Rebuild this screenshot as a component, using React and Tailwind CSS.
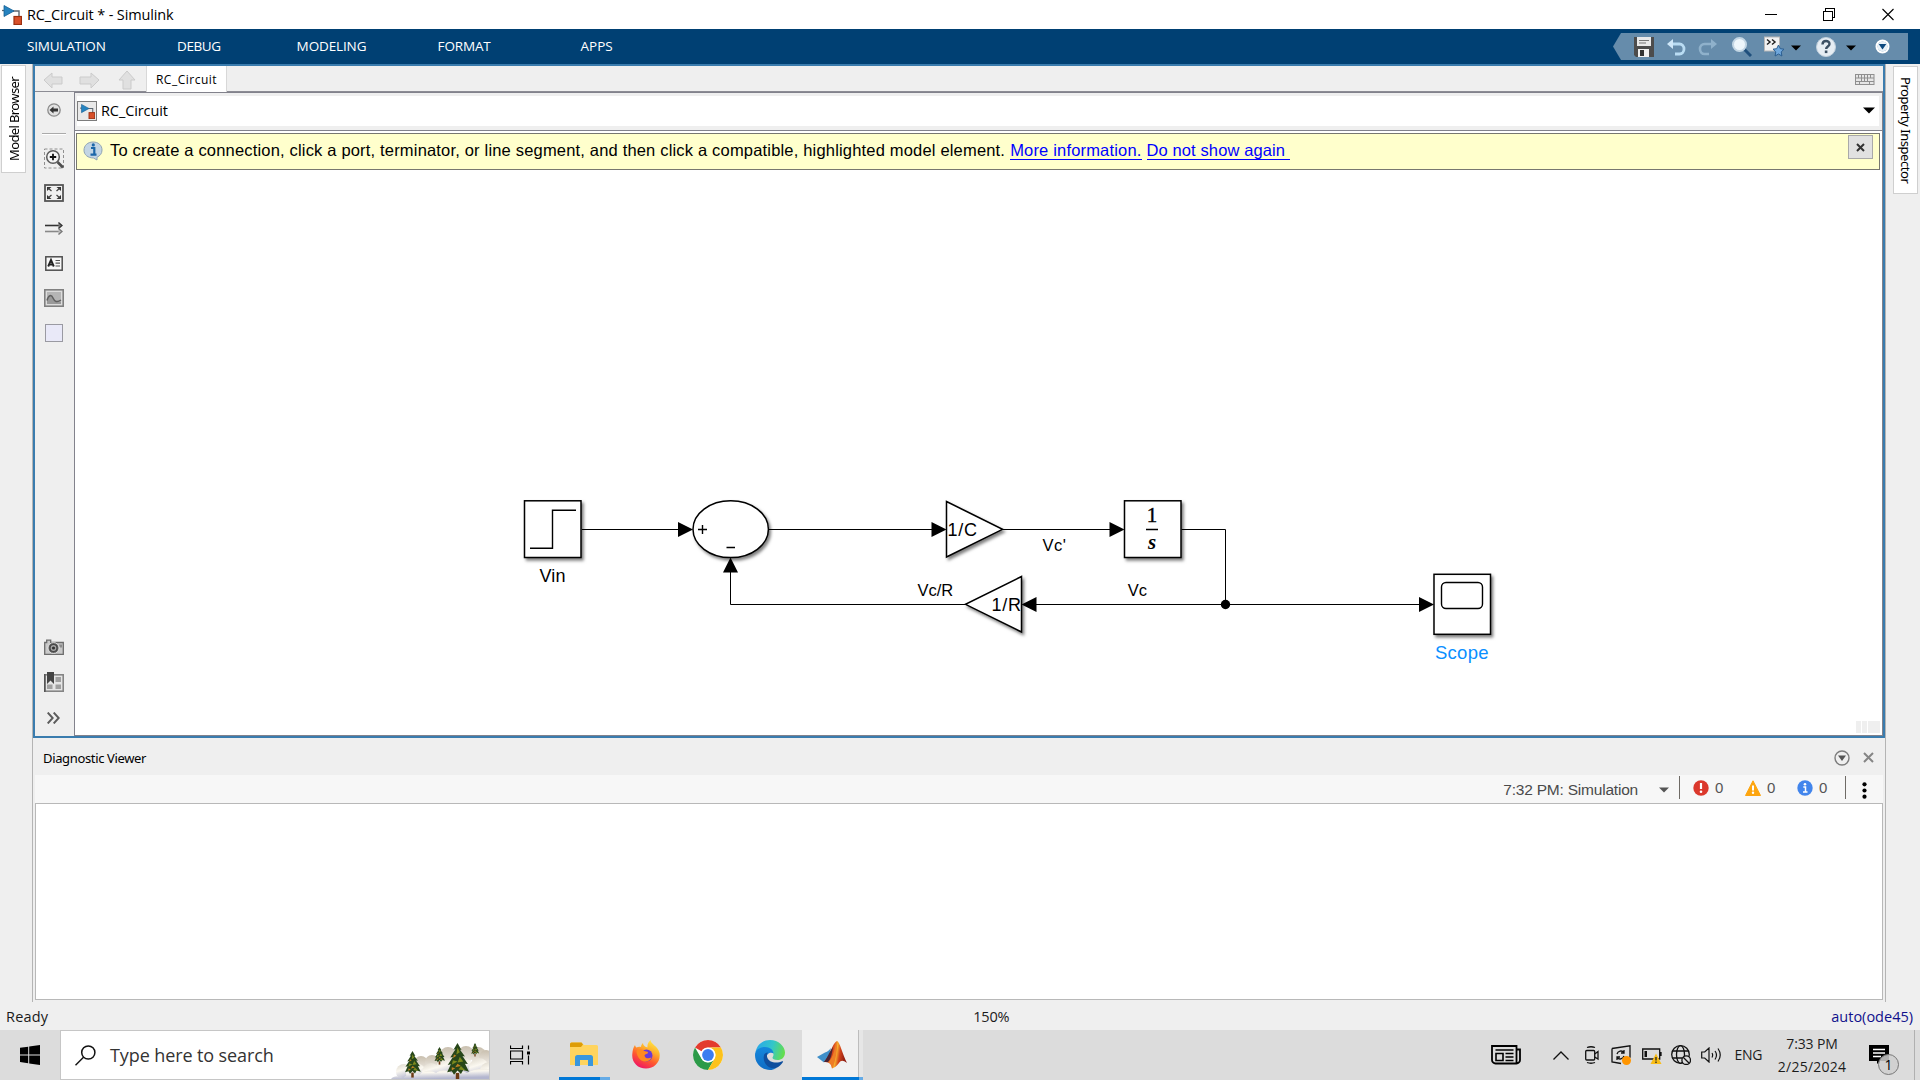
import React, { useLayoutEffect, useRef } from "react";

/* Single-line label whose tracking is adjusted so that it spans a given width. */
function Label({ w, className = "", children }) {
  const ref = useRef(null);
  useLayoutEffect(() => {
    const el = ref.current;
    el.style.letterSpacing = "0px";
    const natural = el.offsetWidth;
    el.style.letterSpacing = (w - natural) / children.length + "px";
  }, [w, children]);
  return (
    <span ref={ref} className={"inline-block shrink-0 whitespace-pre " + className}>
      {children}
    </span>
  );
}

const UI = "font-['Open_Sans',sans-serif]";
const NOTO = "font-['Noto_Sans',sans-serif]";

function SimulinkGlyph({ className }) {
  return (
    <svg className={className} viewBox="0 0 20 20">
      <path d="M11 6h6v6" fill="none" stroke="#5b6670" strokeWidth="1.4" />
      <path d="M0 5.5h3" stroke="#5b6670" strokeWidth="1.3" />
      <path d="M2 0.5v11L12 6z" fill="#2583c0" stroke="#165f93" strokeWidth="0.8" />
      <rect x="12" y="11.5" width="7.5" height="8" fill="#d8502a" stroke="#9c3010" strokeWidth="1.2" />
    </svg>
  );
}

function TitleBar() {
  return (
    <div className="flex h-[29px] items-center bg-white">
      <SimulinkGlyph className="ml-[2px] h-[20px] w-[20px]" />
      <Label w={147} className={"ml-[5px] text-[14.5px] leading-5 text-black " + UI}>{"RC_Circuit * - Simulink"}</Label>
      <svg className="ml-auto mr-[25px] h-[13px] w-[130px]" viewBox="0 0 130 13" fill="none" stroke="#000" shapeRendering="crispEdges">
        <path d="M0 6.5h12" />
        <path d="M58.500 3.500h9v9h-9zM60.500 3.500v-3h9v9h-2" />
        <path d="M117.500 1l11 11M128.500 1l-11 11" shapeRendering="auto" strokeWidth="1.1" />
      </svg>
    </div>
  );
}

function QuickAccess() {
  return (
    <div className="ml-auto mr-[12px] mt-[4px] flex h-[27px] w-[295px] items-center bg-[#668cab] [clip-path:polygon(8px_0,100%_0,100%_100%,8px_100%,0_50%)]">
      <svg className="ml-[21px] h-[20px] w-[20px]" viewBox="0 0 20 20">
        <path d="M0 0h20v20H2l-2-2z" fill="#4c4c4c" />
        <rect x="3" y="0" width="14" height="9" fill="#e9e9e9" />
        <path d="M5 3.500h10M5 6h7" stroke="#777" strokeWidth="1.200" />
        <rect x="4" y="12" width="11" height="8" fill="#f1f1f1" />
        <rect x="6" y="13" width="4" height="6" fill="#333" />
      </svg>
      <svg className="ml-[13px] mt-[2px] h-[18px] w-[19px]" viewBox="0 0 19 18" fill="none">
        <path d="M5 5h7.500a4.500 5 0 0 1 0 10H8" stroke="#b9dcf3" strokeWidth="2.800" />
        <path d="M0 5l6-5v10z" fill="#cfe7f8" />
      </svg>
      <svg className="ml-[12px] mt-[2px] h-[18px] w-[19px]" viewBox="0 0 19 18" fill="none">
        <path d="M14 5H6.500a4.500 5 0 0 0 0 10H11" stroke="#8fb1cb" strokeWidth="2.600" />
        <path d="M19 5l-6-5v10z" fill="#8fb1cb" />
      </svg>
      <svg className="ml-[15px] h-[20px] w-[20px]" viewBox="0 0 20 20">
        <path d="M12 12l7 7" stroke="#1f4f7c" strokeWidth="3" />
        <circle cx="7.500" cy="7.500" r="6.500" fill="#eef6fb" stroke="#c3d6e4" strokeWidth="2" />
      </svg>
      <svg className="ml-[12px] h-[21px] w-[20px]" viewBox="0 0 20 21">
        <rect x="0.500" y="1" width="15" height="14" fill="#f2f2f2" stroke="#b8b8b8" />
        <path d="M3 3.500l3 2.500-3 2.500M8 3.500l3 2.500-3 2.500" fill="none" stroke="#222" strokeWidth="1.500" />
        <path d="M14.500 9l1.800 3.700 3.700.5-2.800 2.700.7 4.100-3.400-2-3.400 2 .7-4.100L9 13.200l3.700-.5z" fill="#6fa7dc" stroke="#2b5e90" strokeWidth="1" />
      </svg>
      <svg className="ml-[7px] mt-[2px] h-[6px] w-[10px]" viewBox="0 0 10 6"><path d="M0 0.500h10L5 5.500z" fill="#000" /></svg>
      <svg className="ml-[15px] h-[20px] w-[20px]" viewBox="0 0 20 20">
        <circle cx="10" cy="10" r="9.500" fill="#e6edf3" stroke="#c2d0dc" />
        <path d="M6.500 7.500c0-4.500 7-4.500 7-.6 0 2.600-3.400 2.600-3.400 5.200" fill="none" stroke="#3c5063" strokeWidth="2.400" />
        <rect x="8.800" y="13.500" width="2.600" height="2.600" fill="#3c5063" />
      </svg>
      <svg className="ml-[10px] mt-[2px] h-[6px] w-[10px]" viewBox="0 0 10 6"><path d="M0 0.500h10L5 5.500z" fill="#000" /></svg>
      <svg className="ml-[19px] h-[15px] w-[15px]" viewBox="0 0 15 15">
        <circle cx="7.500" cy="7.500" r="5.900" fill="#0d4f87" stroke="#fff" strokeWidth="2.200" />
        <circle cx="7.500" cy="7.500" r="5" fill="#e8f1f8" />
        <path d="M3.700 5h7.600l-3.800 5.500z" fill="#0d4a80" />
      </svg>
    </div>
  );
}

function Ribbon() {
  const tabs = [["SIMULATION", 79], ["DEBUG", 44], ["MODELING", 70], ["FORMAT", 53], ["APPS", 32]];
  return (
    <div className="flex h-[35px] bg-[#004073]">
      {tabs.map(([name, w]) => (
        <div key={name} className="flex w-[132.600px] justify-center pt-[7px]">
          <Label w={w} className={"text-[13.500px] leading-5 text-white " + UI}>{name}</Label>
        </div>
      ))}
      <QuickAccess />
    </div>
  );
}

function VerticalLabel({ h, className, children }) {
  const ref = useRef(null);
  useLayoutEffect(() => {
    const el = ref.current;
    el.style.letterSpacing = "0px";
    el.style.letterSpacing = (h - el.offsetHeight) / children.length + "px";
  }, [h, children]);
  return (
    <span ref={ref} className={"inline-block whitespace-pre text-[13px] leading-[18px] text-black [writing-mode:vertical-rl] " + NOTO + " " + className}>
      {children}
    </span>
  );
}

function FileTabs() {
  return (
    <div className="flex h-[26px] shrink-0 items-stretch border-b border-[#8c8c94] bg-[#efefef]">
      <svg className="ml-[8px] mt-[4px] h-[20px] w-[93px]" viewBox="0 0 93 20" fill="#e0e0e0" stroke="#cbcbcb">
        <path d="M1 10l8-7v4h10v7H9v4z" />
        <path d="M56 10l-8-7v4H37v7h11v4z" />
        <path d="M84 1l8 9h-4v9h-8v-9h-4z" />
      </svg>
      <div className="ml-[10px] mb-[-1px] flex w-[81px] items-center justify-center border-x border-[#d8d8d8] bg-white">
        <Label w={61} className={"mt-[1px] text-[12px] leading-4 text-black " + UI}>RC_Circuit</Label>
      </div>
      <svg className="ml-auto mr-[8px] mt-[8px] h-[11px] w-[20px]" viewBox="0 0 20 11" fill="none" stroke="#8f8f8f">
        <rect x="0.500" y="0.500" width="18.500" height="10" fill="#e6e6e6" />
        <path d="M0 4h19M0 7.500h19M3.500 1v3M6.500 1v6M9.500 1v6M12.500 1v6M15.500 1v3M4.500 8v3M14.500 8v3" />
      </svg>
    </div>
  );
}

function Palette() {
  return (
    <div className="flex w-[39px] shrink-0 flex-col items-center bg-[#efefef] pr-[2px]">
      <svg className="mt-[11px] h-[14px] w-[14px]" viewBox="0 0 14 14">
        <circle cx="7" cy="7" r="6.200" fill="#e2e2e2" stroke="#8b8b8b" strokeWidth="1.300" />
        <path d="M2.500 7l4-3.500v2H11v3H6.500v2z" fill="#333" />
      </svg>
      <div className="mt-[16px] h-[2px] w-[24px] border-t border-[#aaa] bg-white" />
      <svg className="mt-[13px] h-[21px] w-[20px]" viewBox="0 0 20 21" fill="none">
        <rect x="0.500" y="1" width="19" height="19" stroke="#909090" strokeDasharray="3 2" />
        <path d="M13.500 14l5.500 5.500" stroke="#4d4d4d" strokeWidth="2.600" />
        <circle cx="9" cy="9" r="6.300" fill="#f5f5f5" stroke="#5c5c5c" strokeWidth="1.500" />
        <path d="M5.800 9h6.400M9 5.800v6.400" stroke="#111" strokeWidth="1.800" />
      </svg>
      <svg className="mt-[15px] h-[18px] w-[20px]" viewBox="0 0 20 18">
        <rect x="1" y="1" width="18" height="16" fill="#f0f0f0" stroke="#555" strokeWidth="1.800" />
        <path d="M3 3h4.500L3 7zM17 3h-4.500L17 7zM3 15h4.500L3 11zM17 15h-4.500l4.500-4z" fill="#333" />
        <path d="M4 4l3.500 3M16 4l-3.500 3M4 14l3.500-3M16 14l-3.500-3" stroke="#444" strokeWidth="1.300" />
      </svg>
      <svg className="mt-[19px] h-[14px] w-[18px]" viewBox="0 0 18 14" fill="none">
        <path d="M0 4.500h15" stroke="#333" strokeWidth="1.600" />
        <path d="M0 10.500h15" stroke="#888" strokeWidth="1.600" />
        <path d="M13.500 1.500l3.500 3-3.500 3" fill="#777" stroke="#333" strokeWidth="1.300" />
        <path d="M13.500 7.500l3.500 3-3.500 3" fill="#bbb" stroke="#777" strokeWidth="1.300" />
      </svg>
      <svg className="mt-[21px] h-[15px] w-[18px]" viewBox="0 0 18 15">
        <rect x="0.800" y="0.800" width="16.400" height="13.400" fill="#f8f8f8" stroke="#4f4f4f" strokeWidth="1.500" />
        <path d="M3.200 10.500L6 4l2.800 6.500M4.300 8.600h3.400" fill="none" stroke="#222" strokeWidth="1.900" />
        <path d="M10.500 4.500h4.500M10.500 7.200h4.500M10.500 10h4.500" stroke="#555" strokeWidth="1.200" />
      </svg>
      <svg className="mt-[18px] h-[18px] w-[20px]" viewBox="0 0 20 18">
        <rect x="0.800" y="0.800" width="18.400" height="16.400" fill="#dcdcdc" stroke="#808080" strokeWidth="1.600" />
        <rect x="3" y="3" width="14" height="12" fill="#b5b5b5" />
        <path d="M3 11.500c1.500-6 4.500-6 6-2.500s4 5 8 3.500V15H3z" fill="#999" />
        <path d="M3 11.500c1.500-6 4.500-6 6-2.500s4 5 8 2" fill="none" stroke="#606060" strokeWidth="1.500" />
      </svg>
      <div className="mt-[17px] h-[18px] w-[18px] border border-[#9a9aa2] bg-[#e9e9f8]" />
      <svg className="mt-auto h-[16px] w-[20px]" viewBox="0 0 20 16">
        <path d="M0.700 3.500h2V1.200h4v2.300h12.600v11.800H.7z" fill="#c9c9c9" stroke="#6c6c6c" strokeWidth="1.300" />
        <circle cx="9.500" cy="9" r="5.500" fill="#666" stroke="#eee" strokeWidth="0.800" />
        <circle cx="9.500" cy="9" r="3.500" fill="#a5a5a5" stroke="#444" strokeWidth="1.200" />
        <circle cx="9.500" cy="9" r="1.600" fill="#333" />
        <path d="M15 5.500h3v3h-2z" fill="#8c8c8c" />
      </svg>
      <svg className="mt-[17px] h-[20px] w-[20px]" viewBox="0 0 20 20">
        <rect x="0.800" y="2.800" width="18.400" height="16.400" fill="#e5e5e5" stroke="#858585" strokeWidth="1.600" />
        <path d="M0.800 2v18" stroke="#555" strokeWidth="1.600" />
        <path d="M11.500 5h5.500v5h-5.500zM11.500 12.500h5.500v4.500h-5.500zM3 12.500h5.500v4.500H3z" fill="#a0a0a0" />
        <path d="M3 0h7v12l-3.500-3.500L3 12z" fill="#444" />
      </svg>
      <svg className="mb-[12px] mt-[20px] h-[12px] w-[13px]" viewBox="0 0 13 12" fill="none" stroke="#5c5c5c" strokeWidth="1.900">
        <path d="M0.700 0.500l5 5.500-5 5.500M6.700 0.500l5 5.500-5 5.500" />
      </svg>
    </div>
  );
}

function PathBar() {
  return (
    <div className="flex h-[39px] shrink-0 border-b border-t border-[#82828c] bg-[#efefef] pb-[4px] pt-[3px]">
      <div className="ml-[2px] mr-[3px] flex flex-1 items-center bg-white">
        <div className="flex h-[20px] w-[20px] items-center justify-center border border-[#7c7c7c] bg-[#e9e9e9]">
          <SimulinkGlyph className="h-[15px] w-[15px]" />
        </div>
        <Label w={67} className={"ml-[4px] text-[14.500px] leading-5 text-black " + UI}>RC_Circuit</Label>
        <svg className="ml-auto mr-[4px] mb-[2px] h-[7px] w-[12px]" viewBox="0 0 12 7"><path d="M0 0.500h12L6 6.500z" fill="#000" /></svg>
      </div>
    </div>
  );
}

function Notice() {
  return (
    <div className="ml-[1px] mr-[2px] mt-[2px] flex h-[37px] shrink-0 border border-[#777770] bg-[#ffffcc] font-['Liberation_Sans',Arial,sans-serif] text-[16.500px] leading-[20px]">
      <svg className="ml-[6px] mt-[7px] h-[20px] w-[20px]" viewBox="0 0 20 20">
        <path d="M10 1c5.500 0 9 3.400 9 8 0 3.500-2 6-5 7.200L14 19l-3.500-2C5 17 1 13.800 1 9.200 1 4.400 4.800 1 10 1z" fill="#c3d5e4" stroke="#8fa3b4" />
        <path d="M8 7h3.300v6.500M7.500 13.600h6" fill="none" stroke="#1c66a8" strokeWidth="2.200" />
        <circle cx="10.300" cy="3.900" r="1.600" fill="#1c66a8" />
      </svg>
      <Label w={895} className="ml-[7px] mt-[6px] text-black">To create a connection, click a port, terminator, or line segment, and then click a compatible, highlighted model element.</Label>
      <Label w={131} className="ml-[5px] mt-[6px] h-[20px] border-b border-[#0000ff] text-[#0000ff]">More information.</Label>
      <Label w={143} className="ml-[5px] mt-[6px] h-[20px] border-b border-[#0000ff] text-[#0000ff]">{"Do not show again "}</Label>
      <div className="ml-auto mr-[6px] mt-[1px] flex h-[24px] w-[25px] items-center justify-center border border-[#a9a9a9] bg-[#e1e1e1]">
        <svg className="h-[9px] w-[9px]" viewBox="0 0 9 9"><path d="M1 1l7 7M8 1L1 8" stroke="#333" strokeWidth="2" /></svg>
      </div>
    </div>
  );
}

/* Block diagram; user units are window pixels. */
function Diagram() {
  return (
    <svg className="block h-[565px] w-[1806px] shrink-0" viewBox="75 170 1806 565">
      <defs>
        <filter id="shadow" x="-20%" y="-20%" width="150%" height="150%">
          <feDropShadow dx="2" dy="2.500" stdDeviation="1.500" floodColor="#000" floodOpacity="0.500" />
        </filter>
      </defs>
      <g fill="none" stroke="#000" strokeWidth="1">
        <path d="M582 529.500H680M768.500 529.500H933M1003 529.500H1111M1181.500 529.500H1225.500V604.500M1420 604.500H1036M965 604.500H730.500V571" />
      </g>
      <g fill="#fff" stroke="#000" strokeWidth="1.500" filter="url(#shadow)">
        <rect x="524.500" y="500.800" width="56.500" height="56.700" />
        <ellipse cx="730.700" cy="529.200" rx="37.700" ry="28.400" />
        <path d="M946.500 501.500v55.500L1002.500 529.300z" />
        <path d="M1021.500 576.500v55.500L965.500 604.300z" />
        <rect x="1124.500" y="500.800" width="56.500" height="56.700" />
        <rect x="1434" y="574.300" width="56.500" height="60" />
      </g>
      <g>
        <path d="M678 522v15l15-7.500z" />
        <path d="M931.500 522v15l15-7.500z" />
        <path d="M1109.500 522v15l15-7.500z" />
        <path d="M1419 597v15l15-7.500z" />
        <path d="M1036.500 597v15l-15-7.500z" />
        <path d="M723 572.500h15l-7.500-15z" />
        <circle cx="1225.500" cy="604.500" r="4.700" />
      </g>
      <g fill="none" stroke="#000" strokeWidth="1.400">
        <path d="M530 548.300h22.500v-38H576" />
        <path d="M698 529.500h9M702.500 525v9M726.500 547.500h8.500M1146 529.500h12" />
        <rect x="1441.500" y="582.500" width="41" height="26" rx="4.500" />
      </g>
      <g fontFamily="'Liberation Sans', Arial, sans-serif" fontSize="18" fill="#000">
        <text x="947.500" y="535.700" textLength="29.500">1/C</text>
        <text x="991.500" y="610.700" textLength="29.500">1/R</text>
        <text x="539.500" y="581.500" textLength="26">Vin</text>
        <text x="1435" y="659" textLength="53.500" fontSize="18.500" fill="#0a8fff">Scope</text>
        <g fontSize="16.500">
          <text x="1042.500" y="550.700" textLength="23.500">{"Vc'"}</text>
          <text x="1127.800" y="595.700">Vc</text>
          <text x="917.500" y="595.700">Vc/R</text>
        </g>
      </g>
      <g fontFamily="'Liberation Serif', 'Times New Roman', serif" textAnchor="middle">
        <text x="1152" y="522" fontSize="21" stroke="#000" strokeWidth="0.400">1</text>
        <text x="1152" y="548.700" fontSize="21" fontWeight="700" fontStyle="italic">s</text>
      </g>
      <g fill="#efefef">
        <rect x="1856" y="721" width="5" height="12" />
        <rect x="1862" y="721" width="5" height="12" />
        <rect x="1868" y="721" width="12" height="12" />
      </g>
    </svg>
  );
}

function Editor() {
  return (
    <div className="flex h-[674px] flex-col border-2 border-[#3a7cae]">
      <FileTabs />
      <div className="flex min-h-0 flex-1">
        <Palette />
        <div className="flex min-w-0 flex-1 flex-col border-b border-l border-r border-[#82828c] bg-white">
          <PathBar />
          <Notice />
          <Diagram />
        </div>
      </div>
    </div>
  );
}

function Count({ children }) {
  return (
    <div className="flex items-center">
      {children}
      <span className="ml-[6px] text-[15px] leading-none text-[#555]">0</span>
    </div>
  );
}

function Diagnostics() {
  return (
    <div className="flex flex-1 flex-col bg-[#efefef]">
      <div className="flex h-[37px] items-center">
        <Label w={103} className={"ml-[10px] mt-[3px] text-[13px] leading-4 text-black " + NOTO}>Diagnostic Viewer</Label>
        <svg className="ml-auto mr-[13px] mt-[2px] h-[16px] w-[16px]" viewBox="0 0 16 16">
          <circle cx="8" cy="8" r="7" fill="none" stroke="#7c7c7c" strokeWidth="1.400" />
          <path d="M4 5.500h8L8 11z" fill="#555" />
        </svg>
        <svg className="mr-[11px] mt-[2px] h-[11px] w-[11px]" viewBox="0 0 11 11"><path d="M1 1l9 9M10 1l-9 9" stroke="#858585" strokeWidth="2" /></svg>
      </div>
      <div className="mx-[2px] flex h-[28px] items-center bg-[#f7f7f7] font-['Liberation_Sans',Arial,sans-serif]">
        <Label w={135} className="ml-auto mt-[1px] text-[15.500px] leading-5 text-[#4a4a4a]">7:32 PM: Simulation</Label>
        <svg className="ml-[21px] mt-[1px] h-[6px] w-[10px]" viewBox="0 0 10 6"><path d="M0 0.500h10L5 5.500z" fill="#555" /></svg>
        <div className="ml-[10px] mb-[4px] h-[23px] w-px bg-[#6f6b66]" />
        <div className="mb-[3px] ml-[13px] flex">
          <div className="w-[52px]"><Count>
            <svg className="h-[16px] w-[16px]" viewBox="0 0 16 16"><circle cx="8" cy="8" r="7.700" fill="#db382c" /><path d="M8 3v6" stroke="#fff" strokeWidth="2.200" /><circle cx="8" cy="11.800" r="1.300" fill="#fff" /></svg>
          </Count></div>
          <div className="w-[52px]"><Count>
            <svg className="h-[16px] w-[16px]" viewBox="0 0 16 16"><path d="M8 0.800L15.500 15.500H.5z" fill="#fda50f" stroke="#fda50f" strokeLinejoin="round" /><path d="M8 5.500v5" stroke="#fff" strokeWidth="2" /><circle cx="8" cy="12.800" r="1.200" fill="#fff" /></svg>
          </Count></div>
          <div className="w-[48px]"><Count>
            <svg className="h-[16px] w-[16px]" viewBox="0 0 16 16"><circle cx="8" cy="8" r="7.700" fill="#4285ec" /><path d="M6.300 7H8.500v5M6 12h4.500" fill="none" stroke="#fff" strokeWidth="1.500" /><circle cx="8" cy="4.200" r="1.300" fill="#fff" /></svg>
          </Count></div>
        </div>
        <div className="mb-[4px] h-[23px] w-px bg-[#6f6b66]" />
        <svg className="ml-[16px] mr-[16px] mt-[2px] h-[17px] w-[5px]" viewBox="0 0 5 17"><circle cx="2.500" cy="2.300" r="2.100" /><circle cx="2.500" cy="8.500" r="2.100" /><circle cx="2.500" cy="14.700" r="2.100" /></svg>
      </div>
      <div className="mx-[2px] h-[197px] border border-[#b8b8b8] bg-white" />
    </div>
  );
}

function Workspace() {
  return (
    <div className="flex h-[938px] bg-[#efefef]">
      <div className="w-[32px] shrink-0 pl-[1px] pt-px">
        <div className="flex h-[108px] w-[25px] items-center justify-center border border-[#cfcfcf] bg-white">
          <VerticalLabel h={84} className="rotate-180">Model Browser</VerticalLabel>
        </div>
      </div>
      <div className="flex w-[1854px] flex-col border-l border-r border-[#b4b4b4]">
        <Editor />
        <Diagnostics />
      </div>
      <div className="flex-1 pl-[7px] pt-[2px]">
        <div className="flex h-[128px] w-[25px] items-center justify-center border border-[#cfcfcf] bg-white">
          <VerticalLabel h={106} className="">Property Inspector</VerticalLabel>
        </div>
      </div>
    </div>
  );
}

function StatusBar() {
  return (
    <div className={"flex h-[28px] items-center bg-[#efefef] pl-[6px] pr-[7px] pt-[2px] text-[14.500px] leading-5 text-[#1a1a1a] " + UI}>
      <Label w={42}>Ready</Label>
      <Label w={36} className="ml-[925px]">150%</Label>
      <Label w={82} className="ml-auto text-[#10108c]">auto(ode45)</Label>
    </div>
  );
}

function Pine({ x, y, s }) {
  return (
    <g transform={`translate(${x} ${y}) scale(${s})`}>
      <path d="M-1.500 26h3v6h-3z" fill="#6b3a12" />
      <path d="M0 0l3.500 6-1.500-.3 4.500 6-2.200-.4 4.700 7-2.500-.3 3.500 7-5-1.500-2 3.500-3-3-3 3.500-2-3-4 1 3.200-7-2.700.6 4.500-7-2.300.4 4.500-7-1.700.3z" fill="#27461a" />
      <path d="M0 4l2 4-3 2zM2 12l3 4-5 1zM-4 15l4 1-5 3zM3 20l4 4-6-1z" fill="#7c8a1e" />
      <path d="M-3 10l2 1-3 2zM0 18l3 2-5 1zM-5 21l3 1-3 2z" fill="#c08322" />
    </g>
  );
}

function SearchBox() {
  return (
    <div className="flex h-[50px] w-[430px] items-center border border-[#c6c6c6] bg-white">
      <svg className="ml-[14px] h-[21px] w-[21px]" viewBox="0 0 21 21" fill="none" stroke="#111" strokeWidth="1.500">
        <circle cx="13.300" cy="7.500" r="6.600" />
        <path d="M8.500 12.300L0.500 20.300" />
      </svg>
      <Label w={164} className={"ml-[14px] text-[18px] leading-6 text-[#333] " + UI}>Type here to search</Label>
      <svg className="ml-auto h-[48px] w-[98px]" viewBox="0 0 98 48">
        <defs>
          <linearGradient id="far" x1="0" y1="0" x2="0" y2="1">
            <stop offset="0" stopColor="#c9bfae" />
            <stop offset="1" stopColor="#eeeae4" />
          </linearGradient>
          <linearGradient id="snow" x1="0" y1="0" x2="0.300" y2="1">
            <stop offset="0" stopColor="#dcd6ca" />
            <stop offset="0.450" stopColor="#fbf8f0" />
            <stop offset="1" stopColor="#b3b6cf" />
          </linearGradient>
        </defs>
        <g fill="url(#far)">
          <circle cx="30" cy="32" r="7" />
          <circle cx="41" cy="31" r="7" />
          <circle cx="57" cy="24" r="8" />
          <circle cx="75" cy="23" r="8" />
          <circle cx="87" cy="24" r="8" />
          <circle cx="95" cy="26" r="7" />
        </g>
        <g fill="url(#snow)">
          <circle cx="13" cy="41" r="8" />
          <circle cx="25" cy="42" r="10" />
          <circle cx="40" cy="41" r="9" />
          <circle cx="55" cy="37" r="10" />
          <circle cx="73" cy="36" r="9" />
          <circle cx="88" cy="37" r="10" />
          <circle cx="98" cy="40" r="9" />
        </g>
        <path d="M0 48c3-4 8-3 12-1 4-4 11-5 16-3 5-5 12-5 17-2 6-4 12-3 15 0 6-3 12-2 16 0 6-4 14-5 22-4v10z" fill="url(#snow)" />
        <Pine x={48.500} y={16} s={0.550} />
        <Pine x={84} y={12} s={0.420} />
        <Pine x={21.500} y={20} s={0.830} />
        <Pine x={66.500} y={12} s={1.150} />
      </svg>
    </div>
  );
}

function TaskbarApps() {
  return (
    <>
      <svg className="ml-[20px] h-[20px] w-[20px] self-center" viewBox="0 0 20 20" fill="none" stroke="#000" strokeWidth="1.200">
        <path d="M0.500 0.500v3h12v-3M0.500 19.500v-3h12v3M0.500 6h12v8h-12zM18.500 0.500v4M18.500 10.500v9" />
        <rect x="17" y="6.500" width="3" height="3" fill="#000" stroke="none" />
      </svg>
      <div className="ml-[29px] flex w-[51px] flex-col items-center">
        <svg className="mr-[2px] mt-[12px] h-[25px] w-[28px]" viewBox="0 0 28 25">
          <path d="M0 2a1.500 1.500 0 0 1 1.500-1.500h10L14 3h12.500A1.500 1.500 0 0 1 28 4.500V23H0z" fill="#ffd45e" />
          <path d="M0 2a1.500 1.500 0 0 1 1.500-1.500h10L13 2.500l-2 2.500H0z" fill="#dd9d08" />
          <path d="M5 24V15.500a2.500 2.500 0 0 1 2.500-2.500h13a2.500 2.500 0 0 1 2.500 2.500V24h-5v-6h-8v6z" fill="#3a97dd" />
        </svg>
        <div className="mt-auto flex h-[3px] w-full"><div className="flex-1 bg-[#0078d7]" /><div className="w-[10px] bg-[#65abe6]" /></div>
      </div>
      <svg className="ml-[22px] mt-[10px] h-[29px] w-[28px]" viewBox="0 0 28 29">
        <defs>
          <linearGradient id="fx" x1="0.800" y1="0" x2="0.300" y2="1">
            <stop offset="0" stopColor="#fff04a" /><stop offset="0.350" stopColor="#ffb02a" />
            <stop offset="0.650" stopColor="#ff5a2e" /><stop offset="1" stopColor="#ee1467" />
          </linearGradient>
        </defs>
        <path d="M3 5c.5 2 1 2 1.500 2.500C6 6.500 8 6.500 9 7c0-2 1-3 2-4 0 3 3 4 4.500 4.500C15 4 17 1.500 18.500 0c0 4 7.500 6 9 13 1.500 8.500-5 15.500-13.500 15.500S-.5 22 .3 14C.6 10 1.500 7 3 5z" fill="url(#fx)" />
        <circle cx="14.500" cy="15.500" r="6" fill="#6a3bd6" />
        <path d="M5 10c4-2 6 0 8 1.200 2 .5 3 .3 3 1.300 0 1.500-3 1.500-3.500 3 .5 3 4 3.500 7 2-2 5-10 5.500-13 0-1.500-3-2.500-5-1.500-7.500z" fill="#ff8a20" />
      </svg>
      <svg className="ml-[33px] mt-[10px] h-[30px] w-[30px]" viewBox="0 0 30 30">
        <circle cx="15" cy="15" r="15" fill="#fff" />
        <path d="M2.010 7.500A15 15 0 0 1 27.990 7.500H15A7.500 7.500 0 0 0 8.500 11.250z" fill="#e33b2e" />
        <path d="M2.010 7.500A15 15 0 0 0 15 30L21.500 18.750A7.500 7.500 0 0 1 8.500 18.750z" fill="#2c9a48" />
        <path d="M27.990 7.500A15 15 0 0 1 15 30L21.500 18.750A7.500 7.500 0 0 0 15 7.500z" fill="#fcc21b" />
        <circle cx="15" cy="15" r="7.300" fill="#fff" />
        <circle cx="15" cy="15" r="5.900" fill="#3c7df0" />
      </svg>
      <svg className="ml-[32px] mt-[10px] h-[30px] w-[30px]" viewBox="0 0 30 30">
        <defs>
          <linearGradient id="edgeTop" x1="0" y1="0.300" x2="1" y2="0.500">
            <stop offset="0" stopColor="#2aa8ea" /><stop offset="0.550" stopColor="#33c6c9" /><stop offset="1" stopColor="#65de4b" />
          </linearGradient>
          <linearGradient id="edgeLow" x1="0" y1="0" x2="0" y2="1">
            <stop offset="0" stopColor="#1488dd" /><stop offset="1" stopColor="#0f6cc4" />
          </linearGradient>
        </defs>
        <path d="M0.500 12C2 4.500 8 0 15 0c8.500 0 15 6.500 15 12.500 0 5-3.500 7.500-7.500 7.500-3.500 0-5-1.200-5-2.200 0-.8 1-1.300 1-3.300 0-2.500-3-5-7-5C6.500 9.500 2 11 .5 12z" fill="url(#edgeTop)" />
        <path d="M0 15c0-5 5-8 10-8 6 0 8.500 4 8.500 6.500-2-1.500-7-1-7 4.500 0 6 5 11.500 10 10C19 29.500 17 30 15 30 6 30 0 23 0 15z" fill="url(#edgeLow)" />
        <path d="M9 15c-2 8 5 15 12 13 3-1 5.500-3.500 7-6 .3-.6-.2-1-.8-.7-5 2.500-14 1.700-15.200-4.800-.3-2 .5-3.500 1-4-2 .3-3.500 1-4 2.500z" fill="#0f4f9e" />
      </svg>
      <div className="ml-[17px] flex w-[61px] flex-col bg-[#e6e6e6]">
        <div className="mr-[4px] flex flex-1 justify-center border-r border-[#bdbdbd] bg-[#f1f1f1]">
          <svg className="ml-[4px] mt-[10px] h-[29px] w-[30px]" viewBox="0 0 30 29">
            <defs>
              <linearGradient id="ml" x1="0" y1="0" x2="1" y2="0.200">
                <stop offset="0" stopColor="#5a1a18" /><stop offset="0.450" stopColor="#d9481e" />
                <stop offset="0.600" stopColor="#f8b02d" /><stop offset="0.750" stopColor="#d2431b" /><stop offset="1" stopColor="#8e1d12" />
              </linearGradient>
            </defs>
            <path d="M0 17l8-4.500c3-.5 4-2.500 6-4.500l-2 9-5 5.500z" fill="#3f8fc9" />
            <path d="M7 22l5-7c2-5 5-13 8-14 3 1 5 12 10 22-4-3-6-3-8 0-2 3-5 5-7 5.500 0-4-3-7-8-6.500z" fill="url(#ml)" />
            <path d="M7 22c2-2 5-9 9-15-1 6-2 12-5 15z" fill="#4b2434" />
            <path d="M15 28.500c-.5-4-2-5.500-4-6.200 3-2 6-9 9-20 0 9-1 18-5 26.200z" fill="#ee7d26" />
          </svg>
        </div>
        <div className="flex h-[3px]"><div className="flex-1 bg-[#0078d7]" /><div className="w-[4px] bg-[#65abe6]" /></div>
      </div>
    </>
  );
}

function Tray() {
  return (
    <div className={"ml-auto flex items-center text-[#1c1c1c] " + UI}>
      <svg className="h-[20px] w-[30px]" viewBox="0 0 30 20" fill="none" stroke="#000" strokeWidth="1.800">
        <path d="M1 1h24.500v17.500H4.500A3.500 3.500 0 0 1 1 15zM25.500 4.500H29V15a3.500 3.500 0 0 1-3.500 3.500" />
        <path d="M4.500 5h18M5 8.500h7v7H5zM14.500 8.500h8M14.500 12h8M14.500 15.500h8" strokeWidth="1.600" />
      </svg>
      <svg className="ml-[32px] h-[9px] w-[16px]" viewBox="0 0 16 9" fill="none" stroke="#111" strokeWidth="1.300"><path d="M0.500 8.500L8 1l7.500 7.500" /></svg>
      <svg className="ml-[16px] h-[18px] w-[14px]" viewBox="0 0 14 18" fill="none" stroke="#111" strokeWidth="1.300">
        <rect x="0.700" y="4.500" width="9" height="9.500" rx="1" /><path d="M9.700 8l3.300-2.500v7.500L9.700 11M2 1.500Q6 0 10 1.500M2 16.500q4 1.500 8 0" />
      </svg>
      <svg className="ml-[12px] h-[20px] w-[21px]" viewBox="0 0 21 20" fill="none" stroke="#111" strokeWidth="1.300">
        <path d="M1 3.500L19 .8v12M1 3.500v13.500l9 1.500" />
        <path d="M6 9a4 4 0 0 1 7-1.500M13 5v3h-3M13 11a4 4 0 0 1-7 1.500M6 15v-3h3" />
        <circle cx="15.500" cy="15.500" r="4.500" fill="#ff9500" stroke="none" />
      </svg>
      <svg className="ml-[10px] mt-[1px] h-[18px] w-[20px]" viewBox="0 0 20 18">
        <path d="M0.700 2h17v10h-17zM19 5v4" fill="none" stroke="#111" strokeWidth="1.300" />
        <rect x="2.500" y="4" width="2.500" height="6" fill="#111" />
        <path d="M14 6.500L19.500 17h-11z" fill="#f9bd17" /><path d="M14 10v3.500M14 14.500v1.500" stroke="#222" strokeWidth="1.300" />
      </svg>
      <svg className="ml-[9px] h-[20px] w-[20px]" viewBox="0 0 20 20" fill="none" stroke="#111" strokeWidth="1.300">
        <circle cx="9.500" cy="9.500" r="8.800" /><ellipse cx="9.500" cy="9.500" rx="4" ry="8.800" /><path d="M1.500 6h16M1.500 13h10" />
        <circle cx="15.200" cy="15.200" r="4.300" fill="#dcdcdc" /><path d="M12.200 12.200l6 6" />
      </svg>
      <svg className="ml-[10px] h-[16px] w-[21px]" viewBox="0 0 21 16" fill="none" stroke="#111" strokeWidth="1.200">
        <path d="M0.700 5h3L8 1v14l-4.300-4h-3zM11 6q1.300 2 0 4.500M14 4q3 4 0 8.500M17 1.500q4.500 6.500 0 13" />
      </svg>
      <Label w={28} className="ml-[13px] text-[14px] leading-5">ENG</Label>
      <div className="ml-[16px] flex w-[68px] flex-col items-center text-[14px] leading-[23px]">
        <Label w={51}>7:33 PM</Label>
        <Label w={68}>2/25/2024</Label>
      </div>
      <svg className="ml-[23px] mt-[10px] h-[32px] w-[31px]" viewBox="0 0 31 32">
        <path d="M0 1h20v16h-9l-3 3v-3H0z" fill="#000" />
        <path d="M4 5.500h12M4 9h12M4 12.500h8" stroke="#fff" strokeWidth="1.300" />
        <circle cx="19.500" cy="20.500" r="10" fill="#cfcfcf" fillOpacity="0.850" stroke="#777" />
        <text x="19.500" y="25.500" textAnchor="middle" fontSize="14" fontFamily="'Open Sans', sans-serif" fill="#000">1</text>
      </svg>
      <div className="ml-[14px] mr-[5px] h-[50px] w-px bg-[#b0b0b0]" />
    </div>
  );
}

function Taskbar() {
  return (
    <div className="flex h-[50px] bg-[#dcdcdc]">
      <svg className="ml-[20px] mr-[20px] h-[20px] w-[20px] self-center" viewBox="0 0 20 20">
        <path d="M0 2.800L8.200 1.700v7.700H0zM9.200 1.500L20 0v9.400H9.200zM0 10.400h8.200v7.800L0 17zM9.200 10.400H20V20L9.200 18.400z" />
      </svg>
      <SearchBox />
      <TaskbarApps />
      <Tray />
    </div>
  );
}

export default function App() {
  return (
    <div className="flex h-[1080px] w-[1920px] flex-col overflow-hidden bg-[#efefef]">
      <TitleBar />
      <Ribbon />
      <Workspace />
      <StatusBar />
      <Taskbar />
    </div>
  );
}
